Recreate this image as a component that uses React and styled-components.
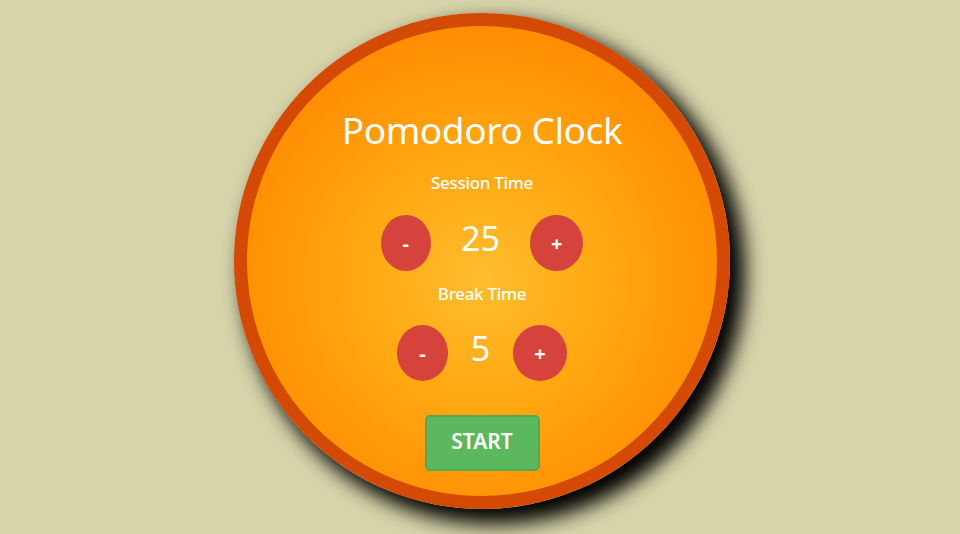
import React, { useState } from 'react';
import styled, { createGlobalStyle } from 'styled-components';

const GlobalStyle = createGlobalStyle`
  html, body {
    margin: 0;
    padding: 0;
    background: #d7d4aa;
    font-family: 'Noto Sans', 'Open Sans', sans-serif;
  }
`;

const Page = styled.div`
  height: 534px;
  padding: 13px 0 0 4px;
  box-sizing: border-box;
  overflow: hidden;
`;

const Clock = styled.main`
  width: 496px;
  height: 496px;
  margin: 0 auto;
  box-sizing: border-box;
  border: 13px solid #d44a05;
  border-radius: 50%;
  background: radial-gradient(circle at 50% 54%, #ffbd2e 0%, #ffa812 35%, #ff8c02 75%, #ff8500 100%);
  box-shadow: 12px 12px 20px 3px #000;
  display: flex;
  flex-direction: column;
  align-items: center;
  color: #fff;
  padding-top: 80px;
`;

const Title = styled.h1`
  margin: 0;
  font-size: 37px;
  font-weight: 400;
  line-height: 48px;
  letter-spacing: -0.4px;
`;

const Label = styled.h3`
  margin: ${(p) => p.top}px 0 0;
  font-size: 17px;
  font-weight: 500;
  line-height: 22px;
  letter-spacing: -0.3px;
`;

const Row = styled.div`
  display: flex;
  align-items: center;
  gap: ${(p) => p.gap}px;
  margin-top: ${(p) => p.top}px;
`;

const RoundButton = styled.button`
  height: 56px;
  padding: 0 ${(p) => p.pad}px;
  border: none;
  border-radius: 50%;
  background: #d5433c;
  color: #fff;
  font-family: inherit;
  font-size: 20px;
  font-weight: 700;
  cursor: pointer;
`;

const Value = styled.span`
  font-size: 34px;
  line-height: 40px;
  padding-bottom: 10px;
`;

const Start = styled.button`
  margin-top: 34px;
  width: 115px;
  height: 56px;
  border: 2px solid #54a84f;
  border-radius: 5px;
  background: #5cb85c;
  color: #fff;
  font-family: inherit;
  font-size: 21px;
  font-weight: 600;
  padding-bottom: 6px;
  cursor: pointer;
`;

const Counter = ({ value, gap, top, onDec, onInc }) => (
  <Row gap={gap} top={top}>
    <RoundButton pad={22} onClick={onDec}>-</RoundButton>
    <Value>{value}</Value>
    <RoundButton pad={21} onClick={onInc}>+</RoundButton>
  </Row>
);

export default function App() {
  const [session, setSession] = useState(25);
  const [brk, setBrk] = useState(5);

  return (
    <Page>
      <GlobalStyle />
      <Clock>
        <Title>Pomodoro Clock</Title>
        <Label top={18}>Session Time</Label>
        <Counter
          value={session}
          gap={30}
          top={21}
          onDec={() => setSession(Math.max(1, session - 1))}
          onInc={() => setSession(session + 1)}
        />
        <Label top={12}>Break Time</Label>
        <Counter
          value={brk}
          gap={23}
          top={20}
          onDec={() => setBrk(Math.max(1, brk - 1))}
          onInc={() => setBrk(brk + 1)}
        />
        <Start>START</Start>
      </Clock>
    </Page>
  );
}
